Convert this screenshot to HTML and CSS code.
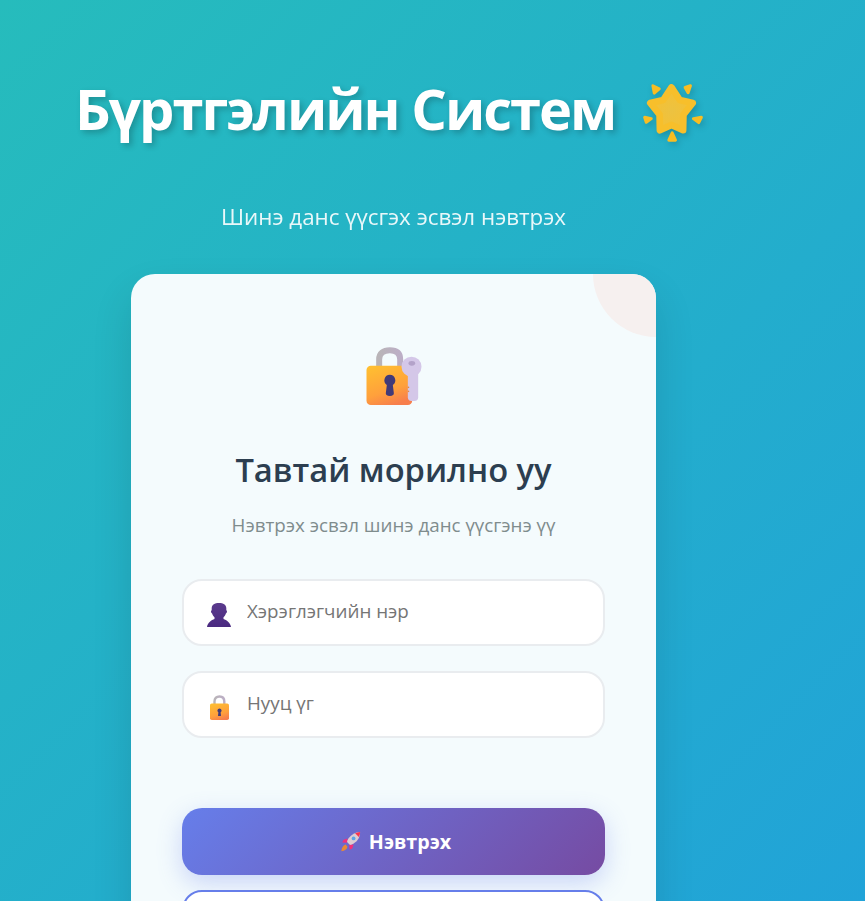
FILE: index.html
```html
<!DOCTYPE html>
<html lang="mn">
<head>
  <meta charset="UTF-8" />
  <meta name="viewport" content="width=device-width, initial-scale=1.0"/>
  <title>Бүртгэлийн Систем</title>
  <link rel="stylesheet" href="styles.css">
</head>
<body>
  <svg class="defs" width="0" height="0" aria-hidden="true">
    <defs>
      <linearGradient id="lockBody" x1="0.2" y1="0" x2="0.6" y2="1">
        <stop offset="0" stop-color="#ffbe31"/>
        <stop offset="0.65" stop-color="#ffa03c"/>
        <stop offset="1" stop-color="#f77e4c"/>
      </linearGradient>
      <linearGradient id="shackle" x1="0" y1="0" x2="1" y2="0">
        <stop offset="0" stop-color="#b9b4b8"/>
        <stop offset="1" stop-color="#bcaec6"/>
      </linearGradient>
      <radialGradient id="starFill" cx="0.5" cy="0.55" r="0.55">
        <stop offset="0" stop-color="#ecc241"/>
        <stop offset="0.7" stop-color="#f3c136"/>
        <stop offset="1" stop-color="#f9b721"/>
      </radialGradient>
      <linearGradient id="bustFill" x1="0" y1="0" x2="0" y2="1">
        <stop offset="0" stop-color="#5b3a8c"/>
        <stop offset="1" stop-color="#4a2a80"/>
      </linearGradient>
    </defs>
  </svg>

  <div class="page">
    <header class="hero">
      <h1 class="hero-title">Бүртгэлийн Систем
        <svg class="star" viewBox="0 0 256 255" aria-hidden="true">
          <path d="M122 52L147 90 186 99 158 134 157 181 122 165 87 181 86 134 58 99 97 90z" class="star-body"/>
          <path d="M66 47L85 56 70 69z" class="spark"/>
          <path d="M179 47L163 52 172 68z" class="spark"/>
          <path d="M41 142L61 146 46 157z" class="spark"/>
          <path d="M212 142L188 146 204 158z" class="spark"/>
          <path d="M124 189L134 211 114 211z" class="spark"/>
        </svg>
      </h1>
      <p class="hero-sub">Шинэ данс үүсгэх эсвэл нэвтрэх</p>
    </header>

    <main class="card">
      <span class="card-corner"></span>

      <svg class="card-icon" viewBox="-4.500 0 270 255" aria-hidden="true">
        <path d="M86 100V76c0-18 12-27 32-27s31 9 31 27v24" fill="none" stroke="url(#shackle)" stroke-width="18"/>
        <rect x="48" y="95" width="137" height="118" rx="13" fill="url(#lockBody)"/>
        <path d="M118 122a17 17 0 0 1 9 31l3 24c.8 5-3 9-12 9s-12.800-4-12-9l3-24a17 17 0 0 1 9-31z" fill="#413a78"/>
        <circle cx="183" cy="98" r="30" fill="#d4c7e8"/>
        <rect x="172" y="108" width="31" height="93" rx="11" fill="#d4c7e8"/>
        <ellipse cx="184" cy="88" rx="10" ry="7" fill="#b3a2c9"/>
        <circle cx="174" cy="160" r="2.500" fill="#e08a4a"/>
        <circle cx="174" cy="172" r="2.500" fill="#e08a4a"/>
      </svg>

      <h2 class="card-title">Тавтай морилно уу</h2>
      <p class="card-sub">Нэвтрэх эсвэл шинэ данс үүсгэнэ үү</p>

      <form class="login-form">
        <label class="field">
          <svg class="field-icon" viewBox="0 0 26 26" aria-hidden="true">
            <path d="M13 1c4.500 0 7 1.500 7.300 5v2.300c1.100.3.900 2.900-.4 3.200-.6 1.700-1.400 3-2.400 3.800v1.600c3 1.200 6.800 3.100 7.500 8.100H1c.7-5 4.500-6.900 7.500-8.100v-1.600c-1-.8-1.800-2.100-2.400-3.800-1.300-.3-1.500-2.900-.4-3.200V6C6 2.500 8.500 1 13 1z" fill="url(#bustFill)"/>
          </svg>
          <input class="field-input" type="text" placeholder="Хэрэглэгчийн нэр">
        </label>
        <label class="field">
          <svg class="field-icon" viewBox="0 0 26 26" aria-hidden="true">
            <path d="M8.500 11V7.500c0-3.500 2-5 5-5s4.800 1.500 4.800 5V11" fill="none" stroke="url(#shackle)" stroke-width="2.400"/>
            <rect x="4" y="9.500" width="19" height="16.500" rx="1.800" fill="url(#lockBody)"/>
            <path d="M13.500 14.500a2.100 2.100 0 0 1 1.100 3.900l.4 3c0 .5-.3.700-.8.700h-1.400c-.5 0-.8-.2-.8-.7l.4-3a2.100 2.100 0 0 1 1.100-3.900z" fill="#413a78"/>
          </svg>
          <input class="field-input" type="password" placeholder="Нууц үг">
        </label>

        <button class="btn btn-primary" type="button">
          <svg class="rocket" viewBox="0 0 24 24" aria-hidden="true">
            <path d="M23 1c-5.500.5-10 2.800-13 7l-2.500 4 4.500 4.500 4-2.500c4.500-3 7-7.500 7-13z" fill="#dccdd2"/>
            <path d="M23 1c-2 .2-4 .7-5.800 1.500l4.300 4.300C22.500 5 23 3 23 1z" fill="#f8334f"/>
            <circle cx="15.500" cy="8.500" r="2.200" fill="#5ca6e8"/>
            <path d="M8.500 8.500L4 10l-1.500 3 5.500.5zM15.500 15.500L14 20l-3 1.500-.5-5.500z" fill="#f0307c"/>
            <path d="M6.500 15.500C4 16 2 18.500 1.500 23c4-.5 6.500-2 7-5z" fill="#e98a35"/>
          </svg>
          Нэвтрэх
        </button>
        <button class="btn btn-outline" type="button" aria-label="Бүртгүүлэх"></button>
      </form>
    </main>
  </div>
</body>
</html>
```
FILE: styles.css
```css
html, body {
  margin: 0;
  min-height: 100%;
}

body {
  font-family: "Open Sans", "Noto Sans", sans-serif;
  background: linear-gradient(135deg, #26bcbc 0%, #21a3d8 100%);
  background-attachment: fixed;
  color: #fff;
  height: 901px;
  overflow: hidden;
}

.defs {
  position: absolute;
}

.page {
  width: 787px;
  display: flex;
  flex-direction: column;
  align-items: center;
}

/* Header */
.hero {
  text-align: center;
  padding-top: 68px;
  margin-bottom: 42px;
}

.hero-title {
  margin: 0 0 47px;
  font-size: 56px;
  line-height: 80px;
  font-weight: 700;
  letter-spacing: -2px;
  white-space: nowrap;
  text-shadow: 3px 3px 6px rgba(0, 0, 0, 0.22);
}

.star {
  width: 85px;
  height: 85px;
  margin-left: 3px;
  margin-right: -4px;
  vertical-align: -25px;
  filter: drop-shadow(2px 3px 3px rgba(0, 0, 0, 0.18));
}

.star-body {
  fill: url(#starFill);
  stroke: #f7bf2b;
  stroke-width: 20;
  stroke-linejoin: round;
}

.spark {
  fill: #f8bd22;
  stroke: #f8bd22;
  stroke-width: 9;
  stroke-linejoin: round;
}

.hero-sub {
  margin: 0;
  font-size: 22.400px;
  line-height: 30px;
  opacity: 0.9;
}

/* Card */
.card {
  position: relative;
  box-sizing: border-box;
  width: 525px;
  padding: 60px 51px 48px;
  background: #f4fbfd;
  border-radius: 24px;
  box-shadow: 0 20px 40px rgba(0, 0, 0, 0.12);
  overflow: hidden;
  text-align: center;
}

.card-corner {
  position: absolute;
  top: -63px;
  right: -63px;
  width: 126px;
  height: 126px;
  border-radius: 50%;
  background: #f6f0ef;
}

.card-icon {
  display: block;
  width: 90px;
  height: 85px;
  margin: 0 auto 28px;
}

.card-title {
  margin: 0 0 19px;
  font-size: 32.700px;
  line-height: 46px;
  font-weight: 600;
  color: #2c3e50;
}

.card-sub {
  margin: 0 0 41px;
  font-size: 18.800px;
  line-height: 26px;
  color: #7f8c8d;
}

/* Form */
.login-form {
  display: flex;
  flex-direction: column;
}

.field {
  display: flex;
  align-items: center;
  box-sizing: border-box;
  height: 67px;
  margin-bottom: 25px;
  padding: 0 22px;
  background: #fff;
  border: 2.500px solid #e9ecef;
  border-radius: 20px;
}

.field-icon {
  flex: none;
  width: 26px;
  height: 26px;
  margin-top: 4px;
  margin-right: 15px;
}

.field-input {
  flex: 1;
  min-width: 0;
  border: none;
  outline: none;
  padding: 0 0 3px;
  background: transparent;
  font-family: inherit;
  font-size: 18.800px;
  color: #333;
}

.field-input::placeholder {
  color: #757575;
  opacity: 1;
}

.btn {
  display: flex;
  align-items: center;
  justify-content: center;
  gap: 8px;
  height: 67px;
  border-radius: 20px;
  font-family: inherit;
  font-size: 19.700px;
  font-weight: 700;
  cursor: pointer;
}

.btn-primary {
  margin-top: 45px;
  margin-bottom: 15px;
  padding-left: 10px;
  border: none;
  color: #fff;
  background: linear-gradient(135deg, #667eea 0%, #764ba2 100%);
  box-shadow: 0 8px 25px rgba(102, 126, 234, 0.3);
}

.btn-outline {
  border: 2.500px solid #667eea;
  color: #667eea;
  background: #fff;
}

.rocket {
  width: 21px;
  height: 21px;
}
```
